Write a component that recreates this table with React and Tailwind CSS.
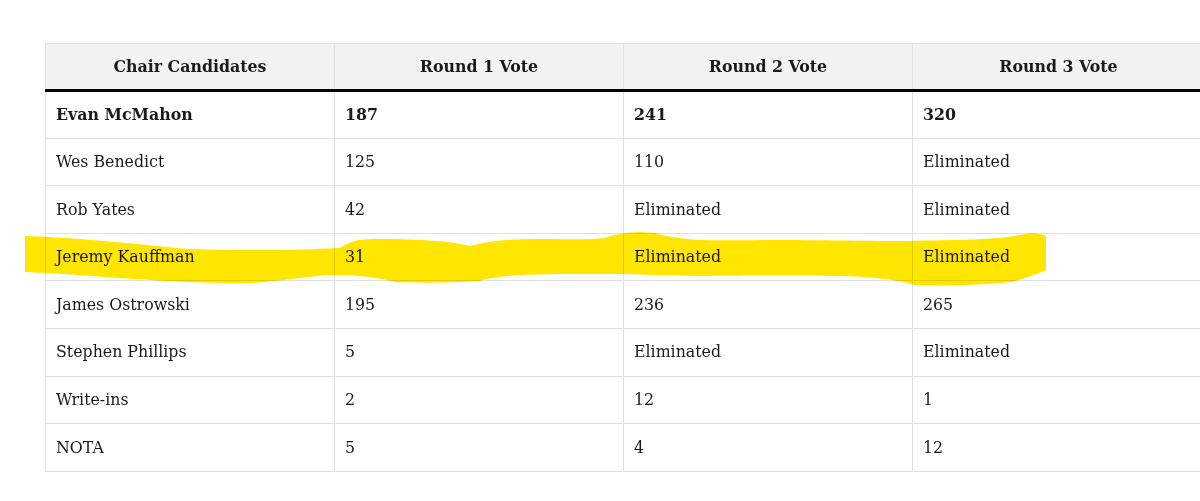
const rows = [
  ["Evan McMahon", "187", "241", "320"],
  ["Wes Benedict", "125", "110", "Eliminated"],
  ["Rob Yates", "42", "Eliminated", "Eliminated"],
  ["Jeremy Kauffman", "31", "Eliminated", "Eliminated"],
  ["James Ostrowski", "195", "236", "265"],
  ["Stephen Phillips", "5", "Eliminated", "Eliminated"],
  ["Write-ins", "2", "12", "1"],
  ["NOTA", "5", "4", "12"],
]

const heads = ["Chair Candidates", "Round 1 Vote", "Round 2 Vote", "Round 3 Vote"]

function Highlight() {
  return (
    <svg className="absolute left-0 top-0 pointer-events-none mix-blend-multiply" width="1200" height="501">
      <path
        fill="#ffe600"
        d="M25 236 C90 238 150 246 190 249 C250 251 300 250 340 248 C352 240 360 239 380 239 C420 239 450 241 470 246 C490 241 505 239 540 239 C570 239 590 240 605 238 C618 233 635 231 655 233 C680 240 700 241 760 240 C830 240 860 241 900 241 C950 240 1000 240 1025 234 C1035 232 1042 234 1046 236 L1046 270 C1040 273 1032 276 1012 282 C980 285 950 286 915 285 C902 281 880 277 840 276 C780 275 720 276 700 276 C660 275 630 274 600 274 C540 274 500 274 480 281 C450 283 420 283 395 282 C375 277 360 275 330 275 C300 277 270 283 245 283 C200 283 160 281 120 278 C80 275 50 273 25 272 Z"
      />
    </svg>
  )
}

function App() {
  return (
    <div className="relative w-[1200px] h-[501px] overflow-hidden bg-white text-[#1a1a1a] font-['DejaVu_Serif',serif] text-[15.8px]">
      <div className="pt-[43px] pl-[45px]">
        <table className="w-[1160px] table-fixed border-collapse border border-[#e1e1e1]">
          <thead>
            <tr className="bg-[#f2f2f2] h-[47px] border-b-[3px] border-b-black">
              {heads.map((h, j) => (
                <th key={h} className={`${j < 3 ? "w-[289px]" : ""} border-x border-[#e1e1e1] font-bold text-center`}>{h}</th>
              ))}
            </tr>
          </thead>
          <tbody>
            {rows.map((r, i) => (
              <tr key={r[0]} className="h-[47.6px] border-b border-[#e1e1e1]">
                {r.map((c, j) => (
                  <td key={j} className={`border-x border-[#e1e1e1] px-[10px] ${i === 0 ? "font-bold" : ""}`}>{c}</td>
                ))}
              </tr>
            ))}
          </tbody>
        </table>
      </div>
      <Highlight />
    </div>
  )
}

export default App
